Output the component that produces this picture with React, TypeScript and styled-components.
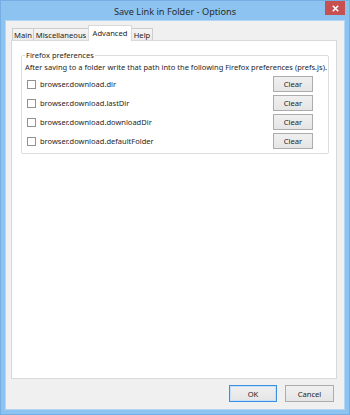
import React from 'react';
import styled, { createGlobalStyle } from 'styled-components';

const Global = createGlobalStyle`
  html, body { margin: 0; padding: 0; }
  body {
    width: 350px;
    height: 415px;
    overflow: hidden;
    font-family: "Noto Sans", "Open Sans", sans-serif;
    color: #1e1e1e;
  }
  * { box-sizing: border-box; }
`;

const Window = styled.div`
  width: 350px;
  height: 415px;
  background: #8cc3f1;
  border: 1px solid #74aee2;
  display: flex;
  flex-direction: column;
`;

const TitleBar = styled.div`
  height: 20px;
  display: grid;
  grid-template-columns: 1fr auto 1fr;
  align-items: center;
`;

const Title = styled.div`
  grid-column: 2;
  font-size: 9.2px;
  line-height: 12px;
  color: #2b2b2b;
  padding-top: 1px;
`;

const CloseButton = styled.div`
  grid-column: 3;
  justify-self: end;
  align-self: start;
  width: 20px;
  height: 14px;
  margin-right: 4px;
  background: #c75050;
  display: flex;
  align-items: center;
  justify-content: center;
`;

const Client = styled.div`
  flex: 1;
  margin: 0 5px 5px;
  background: #f0f0f0;
  display: flex;
  flex-direction: column;
  padding: 4px 7px 0 5px;
  box-shadow: 0 0 0 1px #b3d6f4;
`;

const TabList = styled.div`
  height: 15px;
  display: flex;
  align-items: flex-end;
  padding-left: 1px;
  position: relative;
  z-index: 1;
`;

const Tab = styled.div<{ $w: number; $active?: boolean }>`
  width: ${(p) => p.$w}px;
  height: ${(p) => (p.$active ? 16 : 12)}px;
  margin-bottom: ${(p) => (p.$active ? -1 : 0)}px;
  margin-left: -1px;
  &:first-child { margin-left: 0; }
  border: 1px solid ${(p) => (p.$active ? '#d9d9d9' : '#cdcdcd')};
  border-bottom: none;
  background: ${(p) => (p.$active ? '#ffffff' : 'linear-gradient(#f4f4f4, #ebebeb)')};
  font-size: 7.6px;
  line-height: 10px;
  display: flex;
  justify-content: center;
  align-items: ${(p) => (p.$active ? 'flex-start' : 'center')};
  padding-top: ${(p) => (p.$active ? 2 : 0)}px;
  white-space: nowrap;
  position: relative;
  z-index: ${(p) => (p.$active ? 2 : 1)};
`;

const Panel = styled.div`
  flex: 1;
  background: #ffffff;
  border: 1px solid #d9d9d9;
  padding: 9px 7px 0 9px;
`;

const GroupBox = styled.fieldset`
  margin: 0;
  min-width: 0;
  border: 1px solid #dcdcdc;
  border-radius: 2px;
  padding: 2px 15px 4px 3px;
`;

const Legend = styled.legend`
  padding: 0 1px;
  margin: 0;
  font-size: 7.5px;
  line-height: 10px;
  color: #1e1e1e;
`;

const Description = styled.div`
  font-size: 7.5px;
  line-height: 10px;
  white-space: nowrap;
`;

const Rows = styled.div`
  margin-top: 4px;
  display: flex;
  flex-direction: column;
  gap: 3px;
`;

const Row = styled.div`
  height: 16px;
  display: flex;
  align-items: center;
  padding-left: 2px;
`;

const CheckBox = styled.span`
  width: 9px;
  height: 9px;
  border: 1px solid #929292;
  background: #ffffff;
  margin-right: 4px;
  flex: none;
`;

const RowLabel = styled.span`
  flex: 1;
  font-size: 7.5px;
  line-height: 10px;
`;

const Button = styled.div<{ $w: number; $h: number; $primary?: boolean }>`
  width: ${(p) => p.$w}px;
  height: ${(p) => p.$h}px;
  border: 1px solid ${(p) => (p.$primary ? '#3c8ee0' : '#acacac')};
  box-shadow: ${(p) => (p.$primary ? 'inset 0 0 0 1px #c4e0fa' : 'none')};
  background: linear-gradient(#f0f0f0, #e5e5e5);
  font-size: 7.6px;
  line-height: 10px;
  display: flex;
  align-items: center;
  justify-content: center;
  flex: none;
`;

const Footer = styled.div`
  display: flex;
  justify-content: flex-end;
  gap: 8px;
  padding: 6px 3px 7px 0;
`;

const prefs = [
  'browser.download.dir',
  'browser.download.lastDir',
  'browser.download.downloadDir',
  'browser.download.defaultFolder',
];

const tabs = [
  { label: 'Main', w: 22 },
  { label: 'Miscellaneous', w: 56 },
  { label: 'Advanced', w: 44, active: true },
  { label: 'Help', w: 22 },
];

export default function App() {
  return (
    <>
      <Global />
      <Window>
        <TitleBar>
          <Title>Save Link in Folder - Options</Title>
          <CloseButton>
            <svg width="7" height="7" viewBox="0 0 7 7">
              <path d="M0.8 0.8 L6.2 6.2 M6.2 0.8 L0.8 6.2" stroke="#ffffff" strokeWidth="1.6" />
            </svg>
          </CloseButton>
        </TitleBar>
        <Client>
          <TabList>
            {tabs.map((t) => (
              <Tab key={t.label} $w={t.w} $active={t.active}>
                {t.label}
              </Tab>
            ))}
          </TabList>
          <Panel>
            <GroupBox>
              <Legend>Firefox preferences</Legend>
              <Description>
                After saving to a folder write that path into the following Firefox preferences (prefs.js).
              </Description>
              <Rows>
                {prefs.map((p) => (
                  <Row key={p}>
                    <CheckBox />
                    <RowLabel>{p}</RowLabel>
                    <Button $w={40} $h={16}>Clear</Button>
                  </Row>
                ))}
              </Rows>
            </GroupBox>
          </Panel>
          <Footer>
            <Button $w={48} $h={17} $primary>OK</Button>
            <Button $w={49} $h={17}>Cancel</Button>
          </Footer>
        </Client>
      </Window>
    </>
  );
}
